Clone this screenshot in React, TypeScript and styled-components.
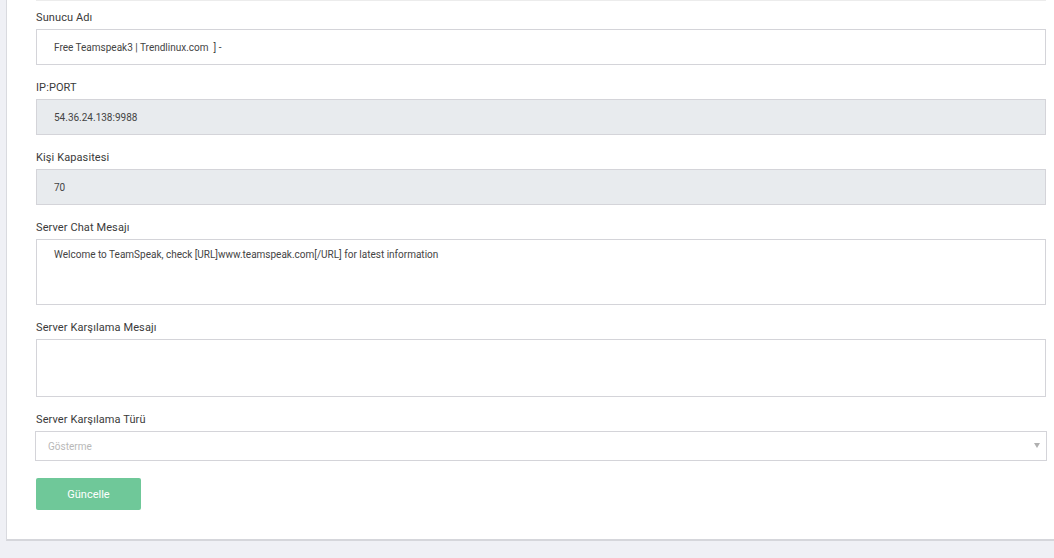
import React from "react";
import styled, { createGlobalStyle } from "styled-components";

const Global = createGlobalStyle`
  html, body { margin: 0; padding: 0; }
  body {
    background: #eff0f5;
    font-family: Roboto, "Liberation Sans", sans-serif;
    overflow: hidden;
  }
`;

const Page = styled.div`
  padding-left: 6px;
  height: 558px;
  overflow: hidden;
`;

const Card = styled.div`
  width: 1069px;
  box-sizing: border-box;
  background: #fff;
  border-left: 1px solid #d9dadf;
  border-bottom: 2px solid #d5d6db;
  padding: 0 29px 29px 29px;
`;

const Divider = styled.div`
  height: 1px;
  background: #ececec;
  margin-bottom: 6px;
`;

const Group = styled.div`
  display: flex;
  flex-direction: column;
  margin-bottom: 12px;
`;

const Label = styled.label`
  font-size: 11px;
  line-height: 17px;
  color: #3a3a3a;
  padding-top: 2px;
  margin-bottom: 3px;
  letter-spacing: 0.1px;
`;

const Input = styled.input<{ $disabled?: boolean }>`
  height: 36px;
  box-sizing: border-box;
  border: 1px solid #d4d4d9;
  background: ${(p) => (p.$disabled ? "#e8ebee" : "#fff")};
  padding: 0 17px;
  font-family: inherit;
  font-size: 10px;
  color: #444;
  outline: none;
  width: 100%;
`;

const TextArea = styled.textarea<{ $h: number }>`
  height: ${(p) => p.$h}px;
  box-sizing: border-box;
  border: 1px solid #d4d4d9;
  background: #fff;
  padding: 8px 17px;
  font-family: inherit;
  font-size: 10px;
  color: #444;
  resize: none;
  outline: none;
  width: 100%;
  line-height: 14px;
`;

const SelectWrap = styled.div`
  position: relative;
  margin-left: -1px;
  margin-right: -1px;
`;

const SelectBox = styled.div`
  height: 30px;
  box-sizing: border-box;
  border: 1px solid #d4d4d9;
  display: flex;
  align-items: center;
  padding: 0 12px;
  font-size: 10px;
  color: #b8b8b8;
`;

const Arrow = styled.span`
  position: absolute;
  right: 7px;
  top: 12px;
  width: 0;
  height: 0;
  border-left: 3px solid transparent;
  border-right: 3px solid transparent;
  border-top: 5px solid #b0b0b0;
`;

const Button = styled.button`
  margin-top: 5px;
  width: 105px;
  height: 32px;
  border: none;
  border-radius: 2px;
  background: #6fc899;
  color: #fff;
  font-family: inherit;
  font-size: 11px;
  cursor: pointer;
`;

export default function App() {
  return (
    <>
      <Global />
      <Page>
        <Card>
          <Divider />
          <Group>
            <Label>Sunucu Adı</Label>
            <Input readOnly value="Free Teamspeak3 | Trendlinux.com  ] -" />
          </Group>
          <Group>
            <Label>IP:PORT</Label>
            <Input readOnly $disabled value="54.36.24.138:9988" />
          </Group>
          <Group>
            <Label>Kişi Kapasitesi</Label>
            <Input readOnly $disabled value="70" />
          </Group>
          <Group>
            <Label>Server Chat Mesajı</Label>
            <TextArea
              readOnly
              $h={66}
              value="Welcome to TeamSpeak, check [URL]www.teamspeak.com[/URL] for latest information"
            />
          </Group>
          <Group>
            <Label>Server Karşılama Mesajı</Label>
            <TextArea readOnly $h={58} value="" />
          </Group>
          <Group>
            <Label>Server Karşılama Türü</Label>
            <SelectWrap>
              <SelectBox>Gösterme</SelectBox>
              <Arrow />
            </SelectWrap>
          </Group>
          <Button>Güncelle</Button>
        </Card>
      </Page>
    </>
  );
}
